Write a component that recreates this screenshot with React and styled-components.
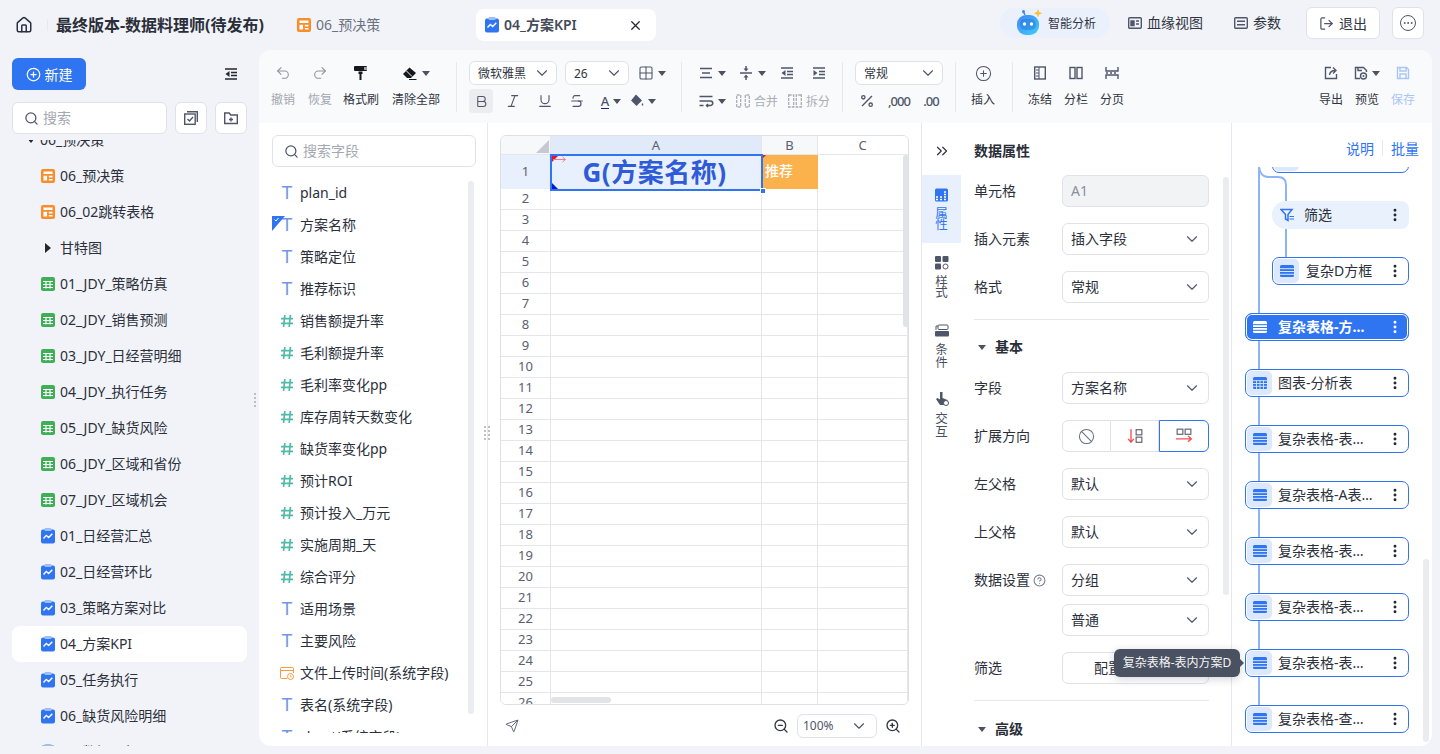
import React from 'react'
import styled, { createGlobalStyle } from 'styled-components'
import {
  Undo2, Redo2, ChevronDown, ChevronsRight, Search, CirclePlus, House, X, LogOut, Ellipsis,
  EllipsisVertical, Ban, Send, ZoomIn, ZoomOut, Italic, Underline, Strikethrough, Bold,
  Percent, Grid2x2, CircleHelp,
} from 'lucide-react'

const GlobalStyle = createGlobalStyle`
  html, body { margin: 0; padding: 0; height: 100%; background: #f1f3f8; }
  body { font-family: "Noto Sans", "Noto Sans CJK SC", sans-serif; font-size: 14px; color: #1f2430; overflow: hidden; }
  * { box-sizing: border-box; }
`

const Page = styled.div`
  width: 1440px;
  height: 754px;
  display: flex;
  flex-direction: column;
  overflow: hidden;
`
const Header = styled.header`
  height: 50px;
  flex: none;
  display: flex;
  align-items: center;
  padding-left: 15px;
`
const HomeBtn = styled.div`
  width: 18px;
  height: 18px;
  display: flex;
  color: #2a3040;
`
const HeadSep = styled.div`
  width: 1px;
  height: 12px;
  margin: 0 8px 0 14px;
  background: #e6e8ee;
`
const AppTitle = styled.div`
  width: 241px;
  font-size: 16px;
  line-height: 22px;
  font-weight: 700;
  color: #2a2e38;
  white-space: nowrap;
`
const HeadTab = styled.div`
  display: flex;
  align-items: center;
  gap: 5px;
  height: 32px;
  font-size: 14px;
  line-height: 20px;
  color: ${p => (p.$active ? '#454b59' : '#6b7280')};
  font-weight: ${p => (p.$active ? 600 : 400)};
  background: ${p => (p.$active ? '#fff' : 'transparent')};
  border-radius: 8px;
  width: ${p => (p.$active ? '180px' : '179px')};
  padding-left: ${p => (p.$active ? '9px' : '0')};
`
const TabClose = styled.span`
  margin-left: auto;
  margin-right: 13px;
  display: flex;
  color: #23272f;
`
const HeadRight = styled.div`
  margin-left: auto;
  margin-right: 16px;
  display: flex;
  align-items: center;
  margin-top: -4px;
`
const AiPill = styled.div`
  width: 110px;
  height: 30px;
  border-radius: 15px;
  background: #eaf1fc;
  display: flex;
  align-items: center;
  padding-left: 14px;
  gap: 4px;
  font-size: 12px;
  color: #30353f;
  margin-right: 18px;
`
const HeadLink = styled.div`
  display: flex;
  align-items: center;
  gap: 5px;
  font-size: 14px;
  line-height: 20px;
  color: #30353f;
  margin-right: ${p => p.$mr || '0'};
`
const HeadButton = styled.div`
  height: 32px;
  width: ${p => p.$w};
  margin-left: ${p => p.$ml};
  border: 1px solid #dfe2e9;
  border-radius: 6px;
  background: #fff;
  display: flex;
  align-items: center;
  justify-content: center;
  gap: 5px;
  color: #30353f;
`

const Body = styled.div`
  flex: 1;
  display: flex;
  min-height: 0;
`
const Sidebar = styled.aside`
  width: 259px;
  flex: none;
  display: flex;
  flex-direction: column;
  position: relative;
`
const SideTop = styled.div`
  height: 40px;
  margin-top: 8px;
  padding: 0 12px;
  display: flex;
  align-items: flex-start;
  justify-content: space-between;
`
const NewButton = styled.button`
  width: 74px;
  height: 32px;
  border: 0;
  border-radius: 6px;
  background: #2f74f0;
  color: #fff;
  font: inherit;
  font-size: 14px;
  display: flex;
  align-items: center;
  justify-content: center;
  gap: 4px;
  padding: 0;
`
const CollapseBtn = styled.div`
  display: flex;
  margin: 8px 8px 0 0;
`
const SideSearchRow = styled.div`
  display: flex;
  gap: 8px;
  padding: 4px 12px 0;
`
const SearchBox = styled.div`
  width: ${p => p.$w};
  height: 32px;
  border: 1px solid #dfe2e9;
  border-radius: 6px;
  background: #fff;
  display: flex;
  align-items: center;
  gap: 4px;
  padding-left: 11px;
  color: #a4a8b2;
  font-size: 14px;
  line-height: 20px;
`
const SquareBtn = styled.div`
  width: 32px;
  height: 32px;
  border: 1px solid #dfe2e9;
  border-radius: 6px;
  background: #fff;
  display: flex;
  align-items: center;
  justify-content: center;
`
const TreeClip = styled.div`
  margin: 6px 0 8px;
  flex: 1;
  overflow: hidden;
`
const TreeList = styled.div`
  margin-top: -18px;
`
const SideRow = styled.div`
  height: 36px;
  margin: 0 12px;
  padding-left: ${p => p.$pl || '29px'};
  display: flex;
  align-items: center;
  gap: 5px;
  font-size: 14px;
  line-height: 20px;
  color: #2b303b;
  white-space: nowrap;
  border-radius: 8px;
  background: ${p => (p.$active ? '#fff' : 'transparent')};
`
const Caret = styled.i`
  display: inline-block;
  flex: none;
  width: 0;
  height: 0;
  border-left: 4px solid transparent;
  border-right: 4px solid transparent;
  border-top: 5px solid ${p => p.$c || '#4c5260'};
`
const RightCaret = styled.i`
  display: inline-block;
  flex: none;
  width: 0;
  height: 0;
  border-top: 5px solid transparent;
  border-bottom: 5px solid transparent;
  border-left: 6px solid #23272f;
  margin: 0 4px 0 -14px;
`
const DragDots = styled.div`
  position: absolute;
  left: ${p => p.$x};
  top: ${p => p.$y};
  width: ${p => p.$w};
  height: 14px;
  display: grid;
  grid-template-columns: repeat(${p => p.$cols}, 2px);
  gap: 2px 2px;
  & > b { width: 2px; height: 2px; border-radius: 50%; background: #a8acb6; }
`

const Main = styled.main`
  width: 1173px;
  height: 696px;
  border-radius: 12px;
  background: #fff;
  overflow: hidden;
  display: flex;
  flex-direction: column;
`
const Toolbar = styled.div`
  height: 73px;
  flex: none;
  background: #f9fafc;
  display: flex;
  padding: 11px 17px 0 12px;
`
const ToolBtn = styled.div`
  display: flex;
  flex-direction: column;
  align-items: center;
  width: ${p => p.$w || '24px'};
  margin-right: ${p => p.$mr || '0'};
  font-size: 12px;
  line-height: 16px;
  white-space: nowrap;
  color: ${p => p.$c || '#30353f'};
`
const ToolIcon = styled.div`
  height: 24px;
  display: flex;
  align-items: center;
  justify-content: center;
  gap: 4px;
  margin-bottom: 7px;
  color: ${p => p.$c || 'inherit'};
`
const ToolSep = styled.div`
  width: 1px;
  height: 50px;
  background: #e6e8ee;
  margin: 1px ${p => p.$r || '12px'} 0 ${p => p.$l || '16px'};
`
const ToolGrid = styled.div`
  width: ${p => p.$w};
  display: flex;
  flex-direction: column;
  gap: 4px;
`
const ToolLine = styled.div`
  height: 24px;
  display: flex;
  align-items: center;
`
const MiniSelect = styled.div`
  width: ${p => p.$w};
  height: 24px;
  margin-right: ${p => p.$mr || '0'};
  border: 1px solid #dfe2e9;
  border-radius: 6px;
  background: #fff;
  display: flex;
  align-items: center;
  justify-content: space-between;
  padding: 0 5px 0 8px;
  font-size: 12px;
  color: #30353f;
`
const IconCell = styled.div`
  width: ${p => p.$w || '32px'};
  margin-left: ${p => p.$ml || '0'};
  height: 24px;
  display: flex;
  align-items: center;
  justify-content: center;
  gap: 4px;
  flex: none;
  border-radius: 4px;
  background: ${p => (p.$on ? '#ecedf1' : 'transparent')};
  color: ${p => (p.$off ? '#a9adb6' : '#50566a')};
  font-size: 12px;
  white-space: nowrap;
`
const ColorLetter = styled.span`
  border-bottom: 1.5px solid #1c2570;
  line-height: 14px;
  font-size: 13px;
  font-weight: 500;
`
const NumFormat = styled.span`
  font-size: 13px;
  font-weight: 500;
  color: #50566a;
  letter-spacing: -1px;
`
const ToolRight = styled.div`
  margin-left: auto;
  display: flex;
  gap: 12px;
`

const Content = styled.div`
  flex: 1;
  display: flex;
  min-height: 0;
  position: relative;
`
const FieldPanel = styled.section`
  width: 229px;
  flex: none;
  border-right: 1px solid #e6e8ee;
  padding: 12px 12px 0 13px;
  position: relative;
`
const FieldClip = styled.div`
  margin: 10px 0 0 -13px;
  height: 556px;
  overflow: hidden;
`
const FieldRow = styled.div`
  height: 32px;
  display: flex;
  align-items: center;
  padding-left: 21px;
  gap: 6px;
  font-size: 14px;
  line-height: 20px;
  color: #2b303b;
  white-space: nowrap;
  position: relative;
`
const FieldType = styled.span`
  width: 14px;
  flex: none;
  display: flex;
  justify-content: center;
`
const TypeLetter = styled.span`
  color: #6f97e6;
  font-family: "Liberation Sans", sans-serif;
  font-size: 18px;
  line-height: 20px;
`
const CheckCorner = styled.div`
  position: absolute;
  left: 13px;
  top: 7px;
  width: 13px;
  height: 15px;
`
const ScrollThumb = styled.div`
  position: absolute;
  left: ${p => p.$x};
  top: ${p => p.$y};
  width: ${p => p.$w};
  height: ${p => p.$h};
  background: ${p => p.$c || '#ebecf0'};
  border-radius: 3px;
`

const SheetPanel = styled.section`
  width: 433px;
  flex: none;
  padding: 12px 12px 0;
  display: flex;
  flex-direction: column;
  position: relative;
`
const SheetFrame = styled.div`
  height: 570px;
  flex: none;
  border: 1px solid #dde0e8;
  border-radius: 6px;
  overflow: hidden;
  position: relative;
`
const SheetRow = styled.div`
  display: grid;
  grid-template-columns: 50px 211px 56px 1fr;
  height: ${p => p.$h || '21px'};
`
const HeadCell = styled.div`
  border-right: 1px solid ${p => (p.$last ? 'transparent' : '#e4e6ec')};
  border-bottom: 1px solid #e4e6ec;
  background: ${p => p.$bg || '#fff'};
  display: flex;
  align-items: center;
  justify-content: center;
  padding-bottom: ${p => p.$pb || '0'};
  font-size: 13px;
  line-height: 16px;
  color: #5b6070;
  position: relative;
`
const Corner = styled.div`
  position: absolute;
  right: 1px;
  bottom: 1px;
  width: 0;
  height: 0;
  border-left: 13px solid transparent;
  border-bottom: 13px solid #c6c9d3;
`
const DataCell = styled.div`
  border-right: 1px solid #e4e6ec;
  border-bottom: 1px solid #e4e6ec;
  background: ${p => p.$bg || '#fff'};
  position: relative;
`
const TitleCell = styled.div`
  background: #e8f0fd;
  outline: 2px solid #2f74f0;
  outline-offset: -1px;
  display: flex;
  align-items: center;
  justify-content: center;
  font-size: 26px;
  line-height: 34px;
  font-weight: 700;
  letter-spacing: 0.5px;
  color: #2f5bd8;
  position: relative;
  z-index: 1;
  white-space: nowrap;
  padding: 0 4px 1px 0;
`
const Handle = styled.i`
  position: absolute;
  right: -4px;
  bottom: -4px;
  width: 6px;
  height: 6px;
  background: #2f74f0;
  border: 1px solid #fff;
`
const Flag = styled.i`
  position: absolute;
  ${p => p.$pos};
  width: 0;
  height: 0;
  border-style: solid;
  border-width: ${p => p.$bw};
  border-color: ${p => p.$bc};
`
const ArrowMark = styled.svg`
  position: absolute;
  left: 2px;
  top: 1px;
`
const RecommendCell = styled(DataCell)`
  background: #fbb14c;
  color: #fff;
  font-size: 14px;
  font-weight: 500;
  line-height: 32px;
  padding-left: 3px;
  border-right: 0;
  white-space: nowrap;
`
const SheetFooter = styled.div`
  flex: 1;
  display: flex;
  align-items: center;
  padding: 0 8px 0 5px;
  color: #50566a;
`
const ZoomGroup = styled.div`
  margin-left: auto;
  display: flex;
  align-items: center;
  gap: 8px;
  color: #30353f;
`
const ZoomSelect = styled.div`
  width: 80px;
  height: 24px;
  border: 1px solid #dfe2e9;
  border-radius: 6px;
  display: flex;
  align-items: center;
  justify-content: space-between;
  padding: 0 8px 0 5px;
  font-size: 12px;
  color: #50566a;
`

const TabRail = styled.nav`
  width: 40px;
  flex: none;
  border-left: 1px solid #e6e8ee;
  display: flex;
  flex-direction: column;
`
const RailTop = styled.div`
  height: 52px;
  flex: none;
  display: flex;
  align-items: center;
  justify-content: center;
  padding-top: 4px;
  color: #30353f;
`
const RailTab = styled.div`
  height: 68px;
  flex: none;
  display: flex;
  flex-direction: column;
  align-items: center;
  padding-top: 13px;
  gap: 6px;
  background: ${p => (p.$active ? '#e8f0fd' : 'transparent')};
  color: ${p => (p.$active ? '#2f74f0' : '#4a5060')};
  font-size: 12.5px;
  line-height: ${p => p.$lh || '11px'};
`
const RailText = styled.span`
  width: 13px;
  text-align: center;
`

const PropPanel = styled.section`
  width: 271px;
  flex: none;
  border-right: 1px solid #e6e8ee;
  padding: 18px 22px 0 13px;
  position: relative;
  overflow: hidden;
`
const PropTitle = styled.div`
  font-size: 14px;
  line-height: 20px;
  font-weight: 700;
  color: #2a2e38;
  margin-bottom: 14px;
`
const FormRow = styled.div`
  display: flex;
  align-items: center;
  height: 32px;
  margin-bottom: ${p => p.$mb || '16px'};
`
const FormLabel = styled.label`
  width: 88px;
  flex: none;
  font-size: 14px;
  line-height: 20px;
  color: #2b303b;
  display: flex;
  align-items: center;
  gap: 3px;
  white-space: nowrap;
`
const Select = styled.div`
  width: 147px;
  height: 32px;
  flex: none;
  margin-left: ${p => p.$ml || '0'};
  border: 1px solid #dfe2e9;
  border-radius: 6px;
  background: ${p => (p.$off ? '#f2f3f5' : '#fff')};
  color: ${p => (p.$off ? '#8a8f9b' : '#2b303b')};
  display: flex;
  align-items: center;
  justify-content: space-between;
  padding: 0 7px 0 ${p => p.$pl || '8px'};
  font-size: 14px;
  line-height: 20px;
  white-space: nowrap;
`
const Divider = styled.div`
  height: 1px;
  background: #e6e8ee;
`
const SectionHead = styled.div`
  display: flex;
  align-items: center;
  gap: 9px;
  margin: ${p => p.$m};
  height: 20px;
  padding-left: 4px;
  font-size: 14px;
  line-height: 20px;
  font-weight: 700;
  color: #2a2e38;
`
const Segments = styled.div`
  width: 147px;
  height: 32px;
  display: grid;
  grid-template-columns: 49px 48px 50px;
`
const Segment = styled.div`
  display: flex;
  align-items: center;
  justify-content: center;
  border: 1px solid ${p => (p.$on ? '#2f74f0' : '#dfe2e9')};
  border-left-width: ${p => (p.$on || p.$first ? '1px' : '0')};
  border-radius: ${p => p.$r || '0'};
`

const TreePanel = styled.section`
  flex: 1;
  position: relative;
  min-width: 0;
`
const TreeHead = styled.div`
  height: 44px;
  padding: 6px 13px 0 0;
  display: flex;
  justify-content: flex-end;
  align-items: center;
  gap: 8px;
  font-size: 14px;
  color: #2f74f0;
`
const TreeHeadSep = styled.i`
  width: 1px;
  height: 16px;
  background: #e6e8ee;
`
const NodeClip = styled.div`
  height: 579px;
  overflow: hidden;
  padding-left: 13px;
`
const NodeList = styled.div`
  margin-top: -22px;
  width: 164px;
  display: flex;
  flex-direction: column;
  gap: 28px;
  position: relative;
`
const NodeLine = styled.svg`
  position: absolute;
  left: 0;
  top: 0;
`
const Node = styled.div`
  height: 28px;
  flex: none;
  position: relative;
  margin-left: ${p => (p.$child ? '27px' : '0')};
  display: flex;
  align-items: center;
  border: 1px solid ${p => (p.$plain ? 'transparent' : '#2f74f0')};
  border-radius: ${p => (p.$plain ? '14px 8px 8px 14px' : '7px')};
  background: ${p => (p.$active ? '#2f74f0' : p.$plain ? '#e9f1fd' : '#fff')};
  box-shadow: ${p => (p.$active ? 'inset 0 0 0 1px #fff' : 'none')};
  color: ${p => (p.$active ? '#fff' : '#2b303b')};
  font-size: 14px;
  font-weight: ${p => (p.$active ? 700 : 400)};
  line-height: 20px;
`
const NodeIcon = styled.span`
  width: 25px;
  height: 24px;
  margin-left: 1px;
  flex: none;
  display: flex;
  align-items: center;
  justify-content: center;
  border-radius: 5px;
  background: ${p => (p.$active || p.$plain ? 'transparent' : '#dbe8fd')};
`
const NodeText = styled.span`
  margin-left: ${p => p.$ml || '6px'};
  width: ${p => p.$w || '92px'};
  overflow: hidden;
  white-space: nowrap;
  text-overflow: ellipsis;
`
const NodeMenu = styled.span`
  margin-left: auto;
  margin-right: 5px;
  display: flex;
  color: ${p => (p.$active ? '#fff' : '#23272f')};
`
const Tooltip = styled.div`
  position: absolute;
  left: -118px;
  top: 526px;
  width: 126px;
  height: 28px;
  background: #4a5160;
  border-radius: 6px;
  color: #f4f5f7;
  font-size: 12px;
  line-height: 28px;
  text-align: center;
  white-space: nowrap;
  box-shadow: 0 2px 8px rgba(30, 35, 50, 0.2);
  z-index: 3;
  &::after {
    content: '';
    position: absolute;
    right: -4px;
    top: 10px;
    border-top: 4px solid transparent;
    border-bottom: 4px solid transparent;
    border-left: 4px solid #4a5160;
  }
`

/* small drawn icons */
const Svg = ({ s = 14, vb = 14, children, ...rest }) => (
  <svg width={s} height={s} viewBox={`0 0 ${vb} ${vb}`} fill="none" style={{ flex: 'none' }} {...rest}>{children}</svg>
)
const DashIcon = () => (
  <Svg>
    <rect width="14" height="14" rx="2" fill="#fa8c2a" />
    <path d="M2.500 2.500h9v2.600h-9zM2.500 6.800h3.600v4.700H2.500zM7.800 6.800h3.700v1.600H7.800zM7.800 9.900h3.700v1.600H7.800z" fill="#fff" />
  </Svg>
)
const GridIcon = () => (
  <Svg>
    <rect width="14" height="14" rx="2" fill="#3fae57" />
    <path d="M2 4.500h10M2 7.500h10M2 10.500h10M5 4.500v7M9 4.500v7" stroke="#fff" strokeWidth="1.200" />
  </Svg>
)
const ChartIcon = () => (
  <svg width="14" height="16" viewBox="0 0 14 16" fill="none" style={{ flex: 'none' }}>
    <rect y="1.500" width="14" height="14" rx="2" fill="#2f74f0" />
    <rect x="3.500" y="0" width="7" height="3" rx="1" fill="#9dbff8" />
    <path d="M2.500 10.500l2.800-3 2.400 2 3.600-3.800" stroke="#fff" strokeWidth="1.400" />
  </svg>
)
const TableIcon = ({ c = '#2f74f0' }) => (
  <Svg>
    <rect y="1" width="14" height="12" rx="1.500" fill={c} />
    <path d="M0 4.700h14M0 7.500h14M0 10.300h14" stroke={c === '#fff' ? '#2f74f0' : '#dbe8fd'} strokeWidth="1" />
  </Svg>
)
const ChartTableIcon = () => (
  <Svg>
    <rect y="1" width="14" height="12" rx="1.500" fill="#2f74f0" />
    <path d="M0 4.700h14M0 7.500h14M0 10.300h14M3.500 4v9M7 4v9M10.500 4v9" stroke="#dbe8fd" strokeWidth="0.900" />
  </Svg>
)
const FilterIcon = () => (
  <Svg>
    <path d="M1 1.500h11L8 6.500v6L5.500 11V6.500z" fill="none" stroke="#2f74f0" strokeWidth="1.500" />
    <path d="M9.500 8.500H14M9.500 11H14" stroke="#2f74f0" strokeWidth="1.200" />
  </Svg>
)
const HashIcon = () => (
  <Svg>
    <path d="M4.800 1L3.600 13M10.400 1L9.200 13M1 4.700h12M1 9.300h12" stroke="#52b9a8" strokeWidth="1.700" />
  </Svg>
)
const TimeIcon = () => (
  <Svg>
    <path d="M7 12.500H1.500a1 1 0 0 1-1-1v-9a1 1 0 0 1 1-1h11a1 1 0 0 1 1 1V7M.5 4.500h13" stroke="#fa9a3c" strokeWidth="1" />
    <circle cx="10.500" cy="10.500" r="3" fill="#fff" stroke="#fa9a3c" />
    <path d="M10.500 9v1.700h1.300" stroke="#fa9a3c" strokeWidth=".8" />
  </Svg>
)
const LinesIcon = ({ d, fill, c = '#50566a', s = 16 }) => (
  <Svg s={s} vb={16}>
    <path d={d} stroke={c} strokeWidth="1.500" />
    {fill && <path d={fill} fill={c} />}
  </Svg>
)
const RobotIcon = () => (
  <svg width="30" height="30" viewBox="0 0 30 30" style={{ flex: 'none' }}>
    <defs>
      <linearGradient id="robotFill" x1="0" y1="0" x2="0.800" y2="1">
        <stop offset="0" stopColor="#3f86f5" />
        <stop offset="1" stopColor="#3fc8f7" />
      </linearGradient>
    </defs>
    <path d="M11 7l-1.500-3" stroke="#3f86f5" strokeWidth="1.500" />
    <circle cx="9.500" cy="3.500" r="1.500" fill="#3f86f5" />
    <rect x="3" y="7" width="22" height="20" rx="9" fill="url(#robotFill)" />
    <rect x="6" y="11" width="16" height="11" rx="5" fill="#1e5fd8" opacity=".35" />
    <circle cx="10.500" cy="16" r="1.700" fill="#fff" />
    <circle cx="17.500" cy="16" r="1.700" fill="#fff" />
    <path d="M24 1l1.200 3 3 1.200-3 1.200L24 9.500l-1.200-3.100-3-1.200 3-1.200z" fill="#fbbf3c" />
  </svg>
)
const RollerIcon = () => (
  <Svg s={16} vb={16}>
    <rect x="1" y="1" width="13" height="5" rx="1" fill="#14181f" />
    <rect x="11" y="2" width="3" height="3" fill="#9aa0ac" />
    <path d="M5.500 6.500h4V9h-1v6h-2V9h-1z" fill="#14181f" />
  </Svg>
)
const EraserIcon = () => (
  <Svg s={16} vb={16}>
    <path d="M1 9l6.500-6.500L14 8l-5 5H5z" fill="#14181f" />
    <path d="M4.500 6l5.500 5.500" stroke="#f9fafc" strokeWidth="1" />
    <path d="M7 14.500h7.500" stroke="#14181f" strokeWidth="1" />
  </Svg>
)

const hollow = { stroke: '#50566a', strokeWidth: 1.4 }
const ALIGN = 'M2 3.500h12M4 8h8M2 12.500h12'
const VALIGN = 'M2 8h12M8 1v3M8 15v-3'
const VALIGN_FILL = 'M5.500 3.500h5L8 6.500zM5.500 12.500h5L8 9.500z'
const OUTDENT = 'M2 3h12M8 6.500h6M8 9.500h6M2 13h12'
const OUTDENT_FILL = 'M6.500 5v6L2.500 8z'
const INDENT = 'M2 3h12M8 6.500h6M8 9.500h6M2 13h12'
const INDENT_FILL = 'M2.500 5v6l4-3z'
const WRAP = 'M1.500 3.500h13M1.500 8h11a2 2 0 0 1 0 4.500H8.500M1.500 12.500h4M10 11l-1.500 1.500L10 14'

const orange = ['06_预决策', '06_02跳转表格']
const green = ['01_JDY_策略仿真', '02_JDY_销售预测', '03_JDY_日经营明细', '04_JDY_执行任务', '05_JDY_缺货风险', '06_JDY_区域和省份', '07_JDY_区域机会']
const blue = ['01_日经营汇总', '02_日经营环比', '03_策略方案对比', '04_方案KPI', '05_任务执行', '06_缺货风险明细', '07_数据明细']

const fields = [
  ['t', 'plan_id'], ['t', '方案名称', true], ['t', '策略定位'], ['t', '推荐标识'],
  ['n', '销售额提升率'], ['n', '毛利额提升率'], ['n', '毛利率变化pp'], ['n', '库存周转天数变化'],
  ['n', '缺货率变化pp'], ['n', '预计ROI'], ['n', '预计投入_万元'], ['n', '实施周期_天'],
  ['n', '综合评分'], ['t', '适用场景'], ['t', '主要风险'], ['d', '文件上传时间(系统字段)'],
  ['t', '表名(系统字段)'], ['t', 'sheet(系统字段)'],
]

const rowNumbers = Array.from({ length: 25 }, (_, i) => i + 2)

const nodes = [
  { name: '复杂表格', child: true },
  { name: '筛选', child: true, plain: true, ml: '5px' },
  { name: '复杂D方框', child: true, ml: '7px' },
  { name: '复杂表格-方案KPI分析', active: true },
  { name: '图表-分析表', chart: true },
  { name: '复杂表格-表内方案A' },
  { name: '复杂表格-A表内方案', w: '97px' },
  { name: '复杂表格-表内方案B' },
  { name: '复杂表格-表内方案C' },
  { name: '复杂表格-表内方案D' },
  { name: '复杂表格-查询方案' },
]

const Dots = ({ n }) => Array.from({ length: n }, (_, i) => <b key={i} />)

const Chevron = ({ size = 18 }) => <ChevronDown size={size} color="#50566a" strokeWidth={1.5} />

const App = () => (
  <Page>
    <GlobalStyle />
    <Header>
      <HomeBtn><House size={18} strokeWidth={2} /></HomeBtn>
      <HeadSep />
      <AppTitle>最终版本-数据料理师(待发布)</AppTitle>
      <HeadTab><DashIcon />06_预决策</HeadTab>
      <HeadTab $active><ChartIcon />04_方案KPI<TabClose><X size={15} strokeWidth={2} /></TabClose></HeadTab>
      <HeadRight>
        <AiPill><RobotIcon />智能分析</AiPill>
        <HeadLink $mr="31px">
          <Svg><rect x=".7" y="1.700" width="12.600" height="10.600" rx="1" {...hollow} /><path d="M3 5h3v1.500H3zM3 8h3v1.500H3zM8 5h3M8 8h3" {...hollow} /></Svg>
          血缘视图
        </HeadLink>
        <HeadLink $mr="25px">
          <Svg><rect x=".7" y="1.700" width="12.600" height="10.600" rx="1" {...hollow} /><path d="M3 5.300h8M3 8.700h8" {...hollow} /></Svg>
          参数
        </HeadLink>
        <HeadButton $w="74px"><LogOut size={15} color="#50566a" />退出</HeadButton>
        <HeadButton $w="32px" $ml="12px"><Ellipsis size={16} style={{ border: '1.500px solid #50566a', borderRadius: '50%', padding: 1 }} color="#50566a" /></HeadButton>
      </HeadRight>
    </Header>
    <Body>
      <Sidebar>
        <SideTop>
          <NewButton><CirclePlus size={15} />新建</NewButton>
          <CollapseBtn><LinesIcon d={OUTDENT} fill={OUTDENT_FILL} c="#23272f" /></CollapseBtn>
        </SideTop>
        <SideSearchRow>
          <SearchBox $w="155px"><Search size={15} color="#50566a" />搜索</SearchBox>
          <SquareBtn>
            <Svg><rect x=".7" y="3" width="10.500" height="10.300" {...hollow} /><path d="M3 .8h10.300V11M3.500 8l2 2 3.500-4" {...hollow} /></Svg>
          </SquareBtn>
          <SquareBtn>
            <Svg><path d="M.7 2h4.500l1.500 2h6.600v8.500H.7zM7 6.500v4M5 8.500h4" {...hollow} /></Svg>
          </SquareBtn>
        </SideSearchRow>
        <TreeClip>
          <TreeList>
            <SideRow $pl="15px"><Caret $c="#23272f" />06_预决策</SideRow>
            {orange.map(t => <SideRow key={t}><DashIcon />{t}</SideRow>)}
            <SideRow $pl="47px"><RightCaret />甘特图</SideRow>
            {green.map(t => <SideRow key={t}><GridIcon />{t}</SideRow>)}
            {blue.map(t => <SideRow key={t} $active={t === '04_方案KPI'}><ChartIcon />{t}</SideRow>)}
          </TreeList>
        </TreeClip>
        <DragDots $x="254px" $y="343px" $w="2px" $cols={1}><Dots n={4} /></DragDots>
      </Sidebar>
      <Main>
        <Toolbar>
          <ToolBtn $mr="13px" $c="#a3a7b1"><ToolIcon $c="#8f949f"><Undo2 size={16} strokeWidth={1.6} /></ToolIcon>撤销</ToolBtn>
          <ToolBtn $mr="11px" $c="#a3a7b1"><ToolIcon $c="#8f949f"><Redo2 size={16} strokeWidth={1.6} /></ToolIcon>恢复</ToolBtn>
          <ToolBtn $w="36px" $mr="13px"><ToolIcon><RollerIcon /></ToolIcon>格式刷</ToolBtn>
          <ToolBtn $w="48px"><ToolIcon><EraserIcon /><Caret /></ToolIcon>清除全部</ToolBtn>
          <ToolSep />
          <ToolGrid $w="199px">
            <ToolLine>
              <MiniSelect $w="88px" $mr="8px">微软雅黑<Chevron /></MiniSelect>
              <MiniSelect $w="64px" $mr="8px">26<Chevron /></MiniSelect>
              <IconCell $w="30px"><Grid2x2 size={16} strokeWidth={1.6} /><Caret /></IconCell>
            </ToolLine>
            <ToolLine>
              <IconCell $w="24px" $on><Bold size={15} strokeWidth={1.7} /></IconCell>
              <IconCell $w="40px"><Italic size={16} strokeWidth={1.7} /></IconCell>
              <IconCell $w="24px"><Underline size={16} strokeWidth={1.7} /></IconCell>
              <IconCell $w="40px"><Strikethrough size={16} strokeWidth={1.7} /></IconCell>
              <IconCell $w="28px"><ColorLetter>A</ColorLetter><Caret /></IconCell>
              <IconCell $w="36px">
                <Svg><path d="M6 1.500L11 6.500 6.500 11 2 6.500zM12.500 9.500v2" {...hollow} fill="#50566a" /></Svg><Caret />
              </IconCell>
            </ToolLine>
          </ToolGrid>
          <ToolSep $l="13px" $r="15px" />
          <ToolGrid $w="132px">
            <ToolLine>
              <IconCell $w="30px"><LinesIcon d={ALIGN} /><Caret /></IconCell>
              <IconCell $w="30px" $ml="10px"><LinesIcon d={VALIGN} fill={VALIGN_FILL} /><Caret /></IconCell>
              <IconCell $w="20px" $ml="10px"><LinesIcon d={OUTDENT} fill={OUTDENT_FILL} /></IconCell>
              <IconCell $w="20px" $ml="12px"><LinesIcon d={INDENT} fill={INDENT_FILL} /></IconCell>
            </ToolLine>
            <ToolLine>
              <IconCell $w="30px"><LinesIcon d={WRAP} /><Caret /></IconCell>
              <IconCell $w="40px" $off $ml="10px">
                <Svg><path d="M.7 1h4v12h-4zM13.300 1h-4v12h4z" stroke="#a9adb6" strokeWidth="1.300" strokeDasharray="3 1" /></Svg>合并
              </IconCell>
              <IconCell $w="40px" $off $ml="12px">
                <Svg><path d="M.7 1h5v12h-5zM13.300 1h-5v12h5z" stroke="#a9adb6" strokeWidth="1.300" strokeDasharray="3 1" /></Svg>拆分
              </IconCell>
            </ToolLine>
          </ToolGrid>
          <ToolSep $l="13px" />
          <ToolGrid $w="88px">
            <ToolLine><MiniSelect $w="88px">常规<Chevron /></MiniSelect></ToolLine>
            <ToolLine>
              <IconCell $w="24px"><Percent size={16} strokeWidth={2} /></IconCell>
              <IconCell $w="40px"><NumFormat>,000</NumFormat></IconCell>
              <IconCell $w="24px"><NumFormat>.00</NumFormat></IconCell>
            </ToolLine>
          </ToolGrid>
          <ToolSep $l="12px" $r="15px" />
          <ToolBtn><ToolIcon $c="#50566a"><CirclePlus size={17} strokeWidth={1.5} /></ToolIcon>插入</ToolBtn>
          <ToolSep $l="17px" $r="15px" />
          <ToolBtn $mr="12px">
            <ToolIcon><Svg><rect x="1.700" y="1" width="10.600" height="12" {...hollow} /><path d="M6 1v12M3 4h3M3 7h3M3 10h3" stroke="#50566a" /></Svg></ToolIcon>冻结
          </ToolBtn>
          <ToolBtn $mr="12px">
            <ToolIcon><Svg><rect x="1" y="1.500" width="5" height="11" {...hollow} /><rect x="8" y="1.500" width="5" height="11" {...hollow} /></Svg></ToolIcon>分栏
          </ToolBtn>
          <ToolBtn>
            <ToolIcon><Svg><path d="M1 1v4h12V1M1 13V9h12v4M1 7h2M5 7h2M9 7h2" {...hollow} /></Svg></ToolIcon>分页
          </ToolBtn>
          <ToolRight>
            <ToolBtn>
              <ToolIcon><Svg><path d="M7 1.500H1.500v11h11V8M5.500 9c.5-3 2.500-4.500 5.500-4.500M9 1.500l3 3-3 3" {...hollow} /></Svg></ToolIcon>导出
            </ToolBtn>
            <ToolBtn>
              <ToolIcon>
                <Svg><path d="M6 12.500H1.500v-11h8l3 3V6M4 1.500v3h4" {...hollow} /><circle cx="9.500" cy="10" r="3" {...hollow} /><circle cx="9.500" cy="10" r="1" fill="#50566a" /></Svg>
                <Caret />
              </ToolIcon>预览
            </ToolBtn>
            <ToolBtn $c="#a9c6f8">
              <ToolIcon><Svg><path d="M1.500 1.500h9l2 2v9h-11zM4 1.500v3.500h6V1.500M4 12.500V8h6v4.500" stroke="#a9c6f8" strokeWidth="1.400" /></Svg></ToolIcon>保存
            </ToolBtn>
          </ToolRight>
        </Toolbar>
        <Content>
          <FieldPanel>
            <SearchBox $w="204px"><Search size={15} color="#50566a" />搜索字段</SearchBox>
            <FieldClip>
              {fields.map(([type, label, checked]) => (
                <FieldRow key={label}>
                  {checked && (
                    <CheckCorner>
                      <svg width="13" height="15" viewBox="0 0 13 15"><path d="M0 0h13L0 15z" fill="#2f74f0" /><path d="M2.500 3.500l1.500 1.500 2.500-3" stroke="#fff" strokeWidth="1" fill="none" /></svg>
                    </CheckCorner>
                  )}
                  <FieldType>{type === 't' ? <TypeLetter>T</TypeLetter> : type === 'n' ? <HashIcon /> : <TimeIcon />}</FieldType>
                  {label}
                </FieldRow>
              ))}
            </FieldClip>
            <ScrollThumb $x="209px" $y="58px" $w="6px" $h="533px" />
          </FieldPanel>
          <SheetPanel>
            <SheetFrame>
              <SheetRow $h="19px">
                <HeadCell $bg="#f7f8fa"><Corner /></HeadCell>
                <HeadCell $bg="#e1eaf8">A</HeadCell>
                <HeadCell $bg="#f7f8fa">B</HeadCell>
                <HeadCell $last>C</HeadCell>
              </SheetRow>
              <SheetRow $h="34px">
                <HeadCell $bg="#e8f0fd" $pb="2px">1</HeadCell>
                <TitleCell>
                  G(方案名称)
                  <Flag $pos="left:1px;top:1px" $bw="3px" $bc="#e8112d transparent transparent #e8112d" />
                  <ArrowMark width="14" height="7" viewBox="0 0 14 7"><path d="M0 3.500h12M9.500 1L12.500 3.500 9.500 6" stroke="#ef7d8b" strokeWidth="1" fill="none" /></ArrowMark>
                  <Flag $pos="left:1px;bottom:1px" $bw="3px" $bc="transparent transparent #0018d8 #0018d8" />
                  <Handle />
                </TitleCell>
                <RecommendCell>
                  推荐
                  <Flag $pos="left:0;top:0" $bw="2px" $bc="#e8112d transparent transparent #e8112d" />
                </RecommendCell>
                <DataCell />
              </SheetRow>
              {rowNumbers.map(n => (
                <SheetRow key={n}>
                  <HeadCell $pb="2px">{n}</HeadCell>
                  <DataCell />
                  <DataCell />
                  <DataCell />
                </SheetRow>
              ))}
              <ScrollThumb $x="402px" $y="19px" $w="6px" $h="172px" $c="#e2e3e7" />
              <ScrollThumb $x="50px" $y="561px" $w="60px" $h="6px" $c="#e2e3e7" />
            </SheetFrame>
            <SheetFooter>
              <Send size={14} strokeWidth={1.5} />
              <ZoomGroup>
                <ZoomOut size={16} />
                <ZoomSelect>100%<Chevron /></ZoomSelect>
                <ZoomIn size={16} />
              </ZoomGroup>
            </SheetFooter>
            <DragDots $x="-4px" $y="303px" $w="6px" $cols={2}><Dots n={8} /></DragDots>
          </SheetPanel>
          <TabRail>
            <RailTop><ChevronsRight size={18} strokeWidth={1.6} /></RailTop>
            <RailTab $active>
              <Svg><rect y=".5" width="13" height="13" rx="1.500" fill="#2f74f0" /><path d="M1 9h2M5 9h2M9 9h2M9 4h2M9 6.500h2M1 11.500h2M5 11.500h2M9 11.500h2" stroke="#fff" strokeWidth="1.300" /></Svg>
              <RailText>属性</RailText>
            </RailTab>
            <RailTab>
              <Svg><rect width="6" height="6" rx="1" fill="#50566a" /><rect x="7.500" width="6" height="6" rx="1" fill="#50566a" /><rect y="7.500" width="6" height="6" rx="1" fill="#50566a" /><circle cx="10.500" cy="10.500" r="2.500" stroke="#50566a" fill="none" /></Svg>
              <RailText>样式</RailText>
            </RailTab>
            <RailTab $lh="12.500px">
              <Svg><rect x="3" y="1" width="10" height="4.500" rx="1" stroke="#50566a" fill="none" /><rect y="7" width="14" height="5.500" rx="1" fill="#50566a" /><path d="M1 6v-4h2" stroke="#50566a" /></Svg>
              <RailText>条件</RailText>
            </RailTab>
            <RailTab $lh="13px">
              <Svg><path d="M5 0h2.500v6l5 2-1 5H5L1 7l1.500-1L5 7.500z" fill="#50566a" /><circle cx="11" cy="11" r="2.500" fill="#fff" stroke="#50566a" /></Svg>
              <RailText>交互</RailText>
            </RailTab>
          </TabRail>
          <PropPanel>
            <PropTitle>数据属性</PropTitle>
            <FormRow><FormLabel>单元格</FormLabel><Select $off>A1</Select></FormRow>
            <FormRow><FormLabel>插入元素</FormLabel><Select>插入字段<Chevron /></Select></FormRow>
            <FormRow><FormLabel>格式</FormLabel><Select>常规<Chevron /></Select></FormRow>
            <Divider />
            <SectionHead $m="17px 0 15px"><Caret />基本</SectionHead>
            <FormRow><FormLabel>字段</FormLabel><Select>方案名称<Chevron /></Select></FormRow>
            <FormRow>
              <FormLabel>扩展方向</FormLabel>
              <Segments>
                <Segment $first $r="6px 0 0 6px"><Ban size={17} color="#6a7080" strokeWidth={1.5} /></Segment>
                <Segment>
                  <Svg s={16}><path d="M3.500 1v11M1 9.500l2.500 3 2.500-3" stroke="#ef5350" strokeWidth="1.200" /><rect x="8" y="1.500" width="5" height="4.500" stroke="#5b6070" /><rect x="8" y="8" width="5" height="4.500" stroke="#5b6070" /></Svg>
                </Segment>
                <Segment $on $r="0 6px 6px 0">
                  <Svg s={16}><rect x="1" y="1" width="5" height="4.500" stroke="#5b6070" /><rect x="8" y="1" width="5" height="4.500" stroke="#5b6070" /><path d="M0 9.500h13M10.500 7l3 2.500-3 2.500" stroke="#ef5350" strokeWidth="1.200" /></Svg>
                </Segment>
              </Segments>
            </FormRow>
            <FormRow><FormLabel>左父格</FormLabel><Select>默认<Chevron /></Select></FormRow>
            <FormRow><FormLabel>上父格</FormLabel><Select>默认<Chevron /></Select></FormRow>
            <FormRow $mb="8px">
              <FormLabel>数据设置<CircleHelp size={13} color="#7a8090" /></FormLabel>
              <Select>分组<Chevron /></Select>
            </FormRow>
            <FormRow><Select $ml="88px">普通<Chevron /></Select></FormRow>
            <FormRow><FormLabel>筛选</FormLabel><Select $pl="31px">配置</Select></FormRow>
            <Divider />
            <SectionHead $m="18px 0 0"><Caret />高级</SectionHead>
            <ScrollThumb $x="262px" $y="54px" $w="6px" $h="418px" />
          </PropPanel>
          <TreePanel>
            <TreeHead>说明<TreeHeadSep />批量</TreeHead>
            <NodeClip>
              <NodeList>
                <NodeLine width="56" height="590" viewBox="0 0 56 590" fill="none">
                  <path d="M14 0V587" stroke="#8fb4f5" strokeWidth="2" />
                  <path d="M14 20c0 8 4 12 10 12h9c5 0 8 3 8 8v72" stroke="#8fb4f5" strokeWidth="2" />
                </NodeLine>
                {nodes.map(n => (
                  <Node key={n.name} $child={n.child} $plain={n.plain} $active={n.active}>
                    <NodeIcon $active={n.active} $plain={n.plain}>
                      {n.plain ? <FilterIcon /> : n.chart ? <ChartTableIcon /> : <TableIcon c={n.active ? '#fff' : '#2f74f0'} />}
                    </NodeIcon>
                    <NodeText $ml={n.ml} $w={n.w}>{n.name}</NodeText>
                    <NodeMenu $active={n.active}><EllipsisVertical size={16} strokeWidth={2.4} /></NodeMenu>
                  </Node>
                ))}
              </NodeList>
            </NodeClip>
            <Tooltip>复杂表格-表内方案D</Tooltip>
            <ScrollThumb $x="191px" $y="436px" $w="6px" $h="183px" />
          </TreePanel>
        </Content>
      </Main>
    </Body>
  </Page>
)

export default App
